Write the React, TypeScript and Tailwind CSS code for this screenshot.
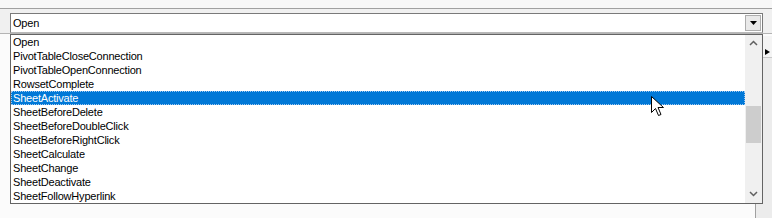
import React from "react";

const items = [
  "Open",
  "PivotTableCloseConnection",
  "PivotTableOpenConnection",
  "RowsetComplete",
  "SheetActivate",
  "SheetBeforeDelete",
  "SheetBeforeDoubleClick",
  "SheetBeforeRightClick",
  "SheetCalculate",
  "SheetChange",
  "SheetDeactivate",
  "SheetFollowHyperlink",
];

export default function App() {
  return (
    <div
      className="relative w-[772px] h-[218px] overflow-hidden bg-[#fbfbfb] text-[11px] tracking-[-0.2px] text-black"
      style={{ fontFamily: '"Liberation Sans", Arial, sans-serif' }}
    >
      <div className="h-[8px] bg-[#f7f7f7]" />
      <div className="h-[26px] border-t border-t-[#a0a0a0] border-b border-b-[#b4b4b4] bg-[#f0f0f0] pl-[10px] pt-[4px]">
        <div className="flex h-[20px] w-[753px] items-stretch border border-[#7a7a7a] border-b-[#b8b8b8] bg-white">
          <div className="flex-1 pl-[2px] leading-[18px]">Open</div>
          <div className="m-[1px] flex w-[16px] items-center justify-center border border-[#adadad] bg-[#e9e9e9]">
            <svg width="7" height="4" viewBox="0 0 7 4">
              <path d="M0 0H7L3.5 4Z" fill="#000" />
            </svg>
          </div>
        </div>
      </div>

      {/* underlying control partially hidden */}
      <div className="absolute left-[755px] top-[36px] h-[182px] w-[17px] border-l border-[#a0a0a0] bg-[#ececec]">
        <div className="h-[22px] border-b border-[#c8c8c8] bg-[#f4f4f4]" />
        <svg className="absolute left-[9px] top-[13px]" width="5" height="6" viewBox="0 0 5 6">
          <path d="M0 0L5 3L0 6Z" fill="#000" />
        </svg>
      </div>

      {/* dropdown list */}
      <div className="absolute left-[10px] top-[34px] flex h-[170px] w-[753px] border border-[#646464] bg-white">
        <div className="flex-1">
          {items.map((it) => {
            const sel = it === "SheetActivate";
            return (
              <div
                key={it}
                className={
                  sel
                    ? "h-[14px] border border-dotted border-[#9fc8f0] bg-[#0078d7] pl-[1px] leading-[12px] text-white"
                    : "h-[14px] pl-[2px] leading-[14px]"
                }
              >
                {it}
              </div>
            );
          })}
        </div>
        <div className="relative w-[17px] bg-[#f0f0f0]">
          <svg className="absolute left-[4px] top-[5px]" width="9" height="6" viewBox="0 0 9 6">
            <path d="M1 5L4.5 1.5L8 5" fill="none" stroke="#606060" strokeWidth="1.5" />
          </svg>
          <div className="absolute left-[1px] top-[71px] h-[37px] w-[15px] bg-[#cdcdcd]" />
          <svg className="absolute left-[4px] top-[156px]" width="9" height="6" viewBox="0 0 9 6">
            <path d="M1 1L4.5 4.5L8 1" fill="none" stroke="#606060" strokeWidth="1.5" />
          </svg>
        </div>
      </div>

      {/* mouse cursor */}
      <svg className="absolute left-[651px] top-[96px]" width="14" height="22" viewBox="0 0 14 22">
        <path
          d="M0.5 0.5V16.5L4.5 12.5L7.5 19.5L10 18.5L7 11.5H12.5Z"
          fill="#fff"
          stroke="#000"
          strokeWidth="1"
          strokeLinejoin="miter"
        />
      </svg>
    </div>
  );
}
